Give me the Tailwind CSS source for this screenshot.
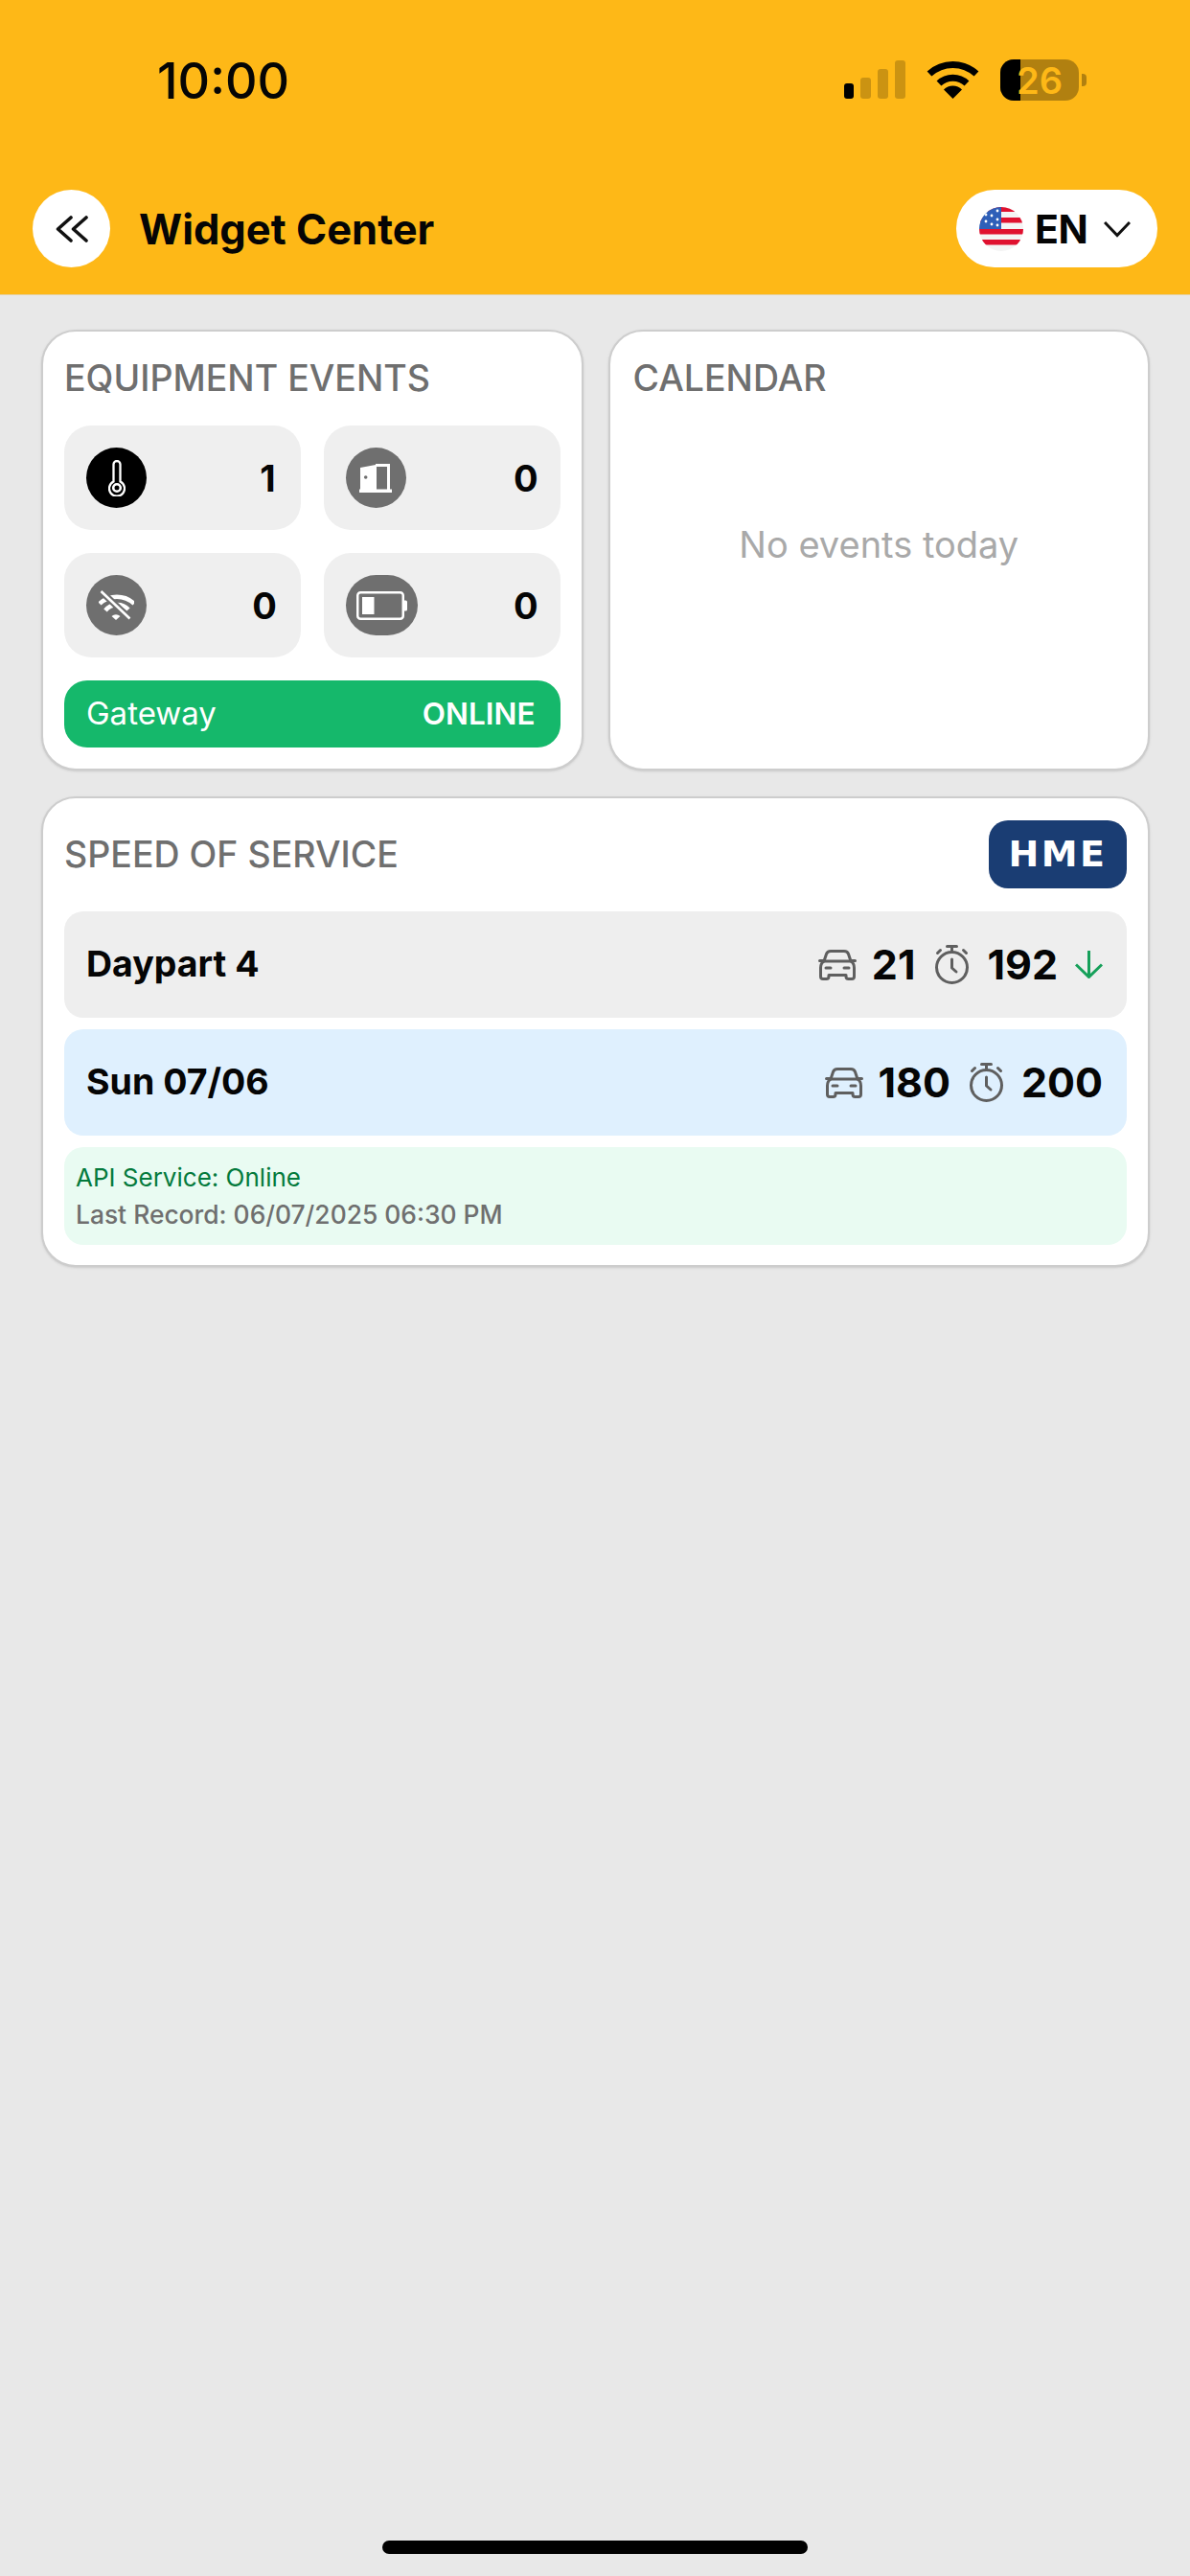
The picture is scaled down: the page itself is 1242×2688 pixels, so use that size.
<!DOCTYPE html>
<html lang="en">
<head>
  <meta charset="UTF-8" />
  <meta name="viewport" content="width=device-width, initial-scale=1.0" />
  <title>Widget Center</title>
  <script src="https://cdn.jsdelivr.net/npm/@tailwindcss/browser@4"></script>
</head>
<body class="w-[1242px] h-[2688px] flex flex-col bg-[#e8e8e8] font-['Inter',sans-serif] text-[#050505] overflow-hidden">

  <!-- Header -->
  <header class="h-[308px] bg-[#feb817] flex flex-col justify-between pb-[28px] border-b border-[#e6cf9a]">
    <div class="flex justify-between items-start pl-[164px] pr-[108px] pt-[55px]">
      <span class="text-[52px] leading-[60px] font-medium">10:00</span>
      <div class="flex items-start gap-[22px] pt-[8px]">
        <div class="flex items-end gap-[7px] h-[40px]">
          <div class="w-[10px] h-[16px] rounded-[3px] bg-black"></div>
          <div class="w-[11px] h-[22px] rounded-[3px] bg-black/20"></div>
          <div class="w-[11px] h-[31px] rounded-[3px] bg-black/20"></div>
          <div class="w-[11px] h-[40px] rounded-[3px] bg-black/20"></div>
        </div>
        <svg width="55" height="40" viewBox="0 0 55 40" fill="none" stroke="#000" stroke-width="7">
          <path d="M3 14 A36 36 0 0 1 52 14" />
          <path d="M13 24 A21 21 0 0 1 42 24" />
          <path d="M27.5 40 L18 30.5 A13.5 13.5 0 0 1 37 30.5 Z" fill="#000" stroke="none" />
        </svg>
        <div class="flex items-center gap-[3px] -mt-[1px]">
          <div class="relative w-[82px] h-[43px] rounded-[14px] bg-black/30 overflow-hidden flex items-center justify-center">
            <div class="absolute inset-y-0 left-0 w-[21px] bg-black"></div>
            <span class="relative text-[38px] leading-none font-semibold text-[#feb817]">26</span>
          </div>
          <div class="w-[5px] h-[13px] rounded-r-[4px] bg-black/30"></div>
        </div>
      </div>
    </div>

    <div class="flex justify-between items-center pl-[34px] pr-[34px]">
      <div class="flex items-center gap-[30px]">
        <button class="w-[81px] h-[81px] rounded-full bg-white flex items-center justify-center">
          <svg width="34" height="28" viewBox="0 0 34 28" fill="none" stroke="#111" stroke-width="3.6" stroke-linecap="round" stroke-linejoin="round">
            <path d="M16 2 L2.5 14 L16 26" />
            <path d="M32 2 L18.5 14 L32 26" />
          </svg>
        </button>
        <h1 class="text-[43.5px] leading-[54px] font-bold">Widget Center</h1>
      </div>
      <button class="w-[210px] h-[81px] rounded-[40px] bg-white flex items-center pl-[24px]">
        <svg width="46" height="46" viewBox="0 0 46 46">
          <defs><clipPath id="flagClip"><circle cx="23" cy="23" r="23" /></clipPath></defs>
          <g clip-path="url(#flagClip)">
            <rect width="46" height="46" fill="#f4f4f4" />
            <rect y="0" width="46" height="5" fill="#e0112f" />
            <rect y="11" width="46" height="5.5" fill="#e0112f" />
            <rect y="23" width="46" height="5.5" fill="#e0112f" />
            <rect y="34" width="46" height="5.5" fill="#e0112f" />
            <rect width="23" height="23" fill="#2f5fb8" />
            <g fill="#fff">
              <circle cx="7" cy="15" r="1.4" /><circle cx="13" cy="9" r="1.4" /><circle cx="19" cy="4" r="1.4" />
              <circle cx="13" cy="18" r="1.4" /><circle cx="19" cy="13" r="1.4" /><circle cx="7" cy="8" r="1.4" /><circle cx="19" cy="19" r="1.4" />
            </g>
          </g>
        </svg>
        <span class="w-[55px] ml-[12px] text-[41px] leading-[54px] font-bold tracking-[-0.5px]">EN</span>
        <svg class="ml-[17px]" width="28" height="18" viewBox="0 0 28 18" fill="none" stroke="#111" stroke-width="3">
          <path d="M1 2 L14 15.5 L27 2" />
        </svg>
      </button>
    </div>
  </header>

  <main class="flex-1 pl-[43px] pr-[42px] pt-[36px]">
    <div class="grid grid-cols-2 gap-[26px]">

      <!-- Equipment events -->
      <section class="h-[460px] bg-white border-2 border-[#cdcdcd] rounded-[36px] shadow-sm px-[22px] pt-[27px]">
        <h2 class="text-[37.5px] leading-[44px] font-medium text-[#6f6f6f]">EQUIPMENT EVENTS</h2>
        <div class="grid grid-cols-2 gap-[24px] mt-[27px]">
          <div class="h-[109px] rounded-[28px] bg-[#efefef] flex items-center justify-between pl-[23px] pr-[26px]">
            <div class="w-[63px] h-[63px] rounded-full bg-black flex items-center justify-center">
              <svg width="18" height="38" viewBox="0 0 18 38" fill="none" stroke="#fff" stroke-width="2.3">
                <path d="M5.5 22.5 V4.5 a3.5 3.5 0 0 1 7 0 V22.5 a8 8 0 1 1 -7 0 Z" />
                <circle cx="9" cy="29" r="3.8" stroke-width="2.6" />
              </svg>
            </div>
            <span class="text-[38px] leading-none font-bold">1</span>
          </div>
          <div class="h-[109px] rounded-[28px] bg-[#efefef] flex items-center justify-between pl-[23px] pr-[23px]">
            <div class="w-[63px] h-[63px] rounded-full bg-[#6f6f6f] flex items-center justify-center">
              <svg width="34" height="30" viewBox="0 0 34 30" fill="#fff">
                <rect y="26.5" width="34" height="3.5" />
                <path d="M1 27 V4 L17 1 V27 Z" />
                <path d="M17 0 H32 V27 H29 V3 H18 V27 H17 Z" />
                <circle cx="6.7" cy="14" r="1.8" fill="#6f6f6f" />
              </svg>
            </div>
            <span class="text-[38px] leading-none font-bold">0</span>
          </div>
          <div class="h-[109px] rounded-[28px] bg-[#efefef] flex items-center justify-between pl-[23px] pr-[25px]">
            <div class="w-[63px] h-[63px] rounded-full bg-[#6f6f6f] flex items-center justify-center">
              <svg width="37" height="31" viewBox="0 0 37 31" fill="none">
                <path d="M1 14 A26 26 0 0 1 37 14" stroke="#fff" stroke-width="4.5" />
                <path d="M7 21 A16 16 0 0 1 31 20" stroke="#fff" stroke-width="4.5" />
                <path d="M18 31 L13.5 27 A7 7 0 0 1 22.5 27 Z" fill="#fff" />
                <path d="M2.5 1 L32.5 29.5" stroke="#6f6f6f" stroke-width="7" />
                <path d="M2.5 1 L32.5 29.5" stroke="#fff" stroke-width="2.6" />
              </svg>
            </div>
            <span class="text-[38px] leading-none font-bold">0</span>
          </div>
          <div class="h-[109px] rounded-[28px] bg-[#efefef] flex items-center justify-between pl-[23px] pr-[23px]">
            <div class="h-[63px] rounded-full bg-[#6f6f6f] flex items-center pl-[11px] pr-[10px]">
              <svg width="54" height="30" viewBox="0 0 54 30" fill="none">
                <rect x="1.25" y="1.25" width="47.5" height="27.5" rx="3" stroke="#fff" stroke-width="2.5" />
                <rect x="6" y="6" width="12.5" height="18" fill="#fff" />
                <path d="M50 9.5 h1.5 a1.5 1.5 0 0 1 1.5 1.5 v8 a1.5 1.5 0 0 1 -1.5 1.5 h-1.5 Z" fill="#fff" />
              </svg>
            </div>
            <span class="text-[38px] leading-none font-bold">0</span>
          </div>
        </div>
        <div class="h-[70px] mt-[24px] rounded-[24px] bg-[#15b86b] text-white text-[33px] flex items-center justify-between pl-[23px] pr-[26px]">
          <span>Gateway</span>
          <span class="text-[31.5px] font-semibold">ONLINE</span>
        </div>
      </section>

      <!-- Calendar -->
      <section class="h-[460px] bg-white border-2 border-[#cdcdcd] rounded-[36px] shadow-sm px-[24px] pt-[27px]">
        <h2 class="text-[37.5px] leading-[44px] font-medium text-[#6f6f6f]">CALENDAR</h2>
        <p class="mt-[129px] text-center text-[38px] leading-[44px] text-[#a9a9a9]">No events today</p>
      </section>

      <!-- Speed of service -->
      <section class="col-span-2 mt-[1px] h-[491px] bg-white border-2 border-[#cdcdcd] rounded-[36px] shadow-sm px-[22px] pt-[23px]">
        <div class="flex items-center justify-between">
          <h2 class="text-[37.5px] leading-[44px] font-medium text-[#6f6f6f]">SPEED OF SERVICE</h2>
          <div class="w-[144px] h-[71px] rounded-[20px] bg-[#1a3d73] text-white flex items-center justify-center font-['DejaVu_Sans',sans-serif] font-bold text-[38px] tracking-[2.5px]">HME</div>
        </div>

        <div class="flex flex-col gap-[12px] mt-[24px]">
          <div class="h-[111px] rounded-[20px] bg-[#eeeeee] flex items-center justify-between pl-[23px] pr-[25px]">
            <span class="text-[37.5px] font-bold">Daypart 4</span>
            <div class="flex items-center text-[43px] font-bold">
              <svg width="40" height="32" viewBox="0 0 40 32" fill="none" stroke="#5f5f5f" stroke-width="3" stroke-linecap="round" stroke-linejoin="round">
                <path d="M6 12 L8.5 4.5 Q9.5 1.5 13 1.5 H27 Q30.5 1.5 31.5 4.5 L34 12" />
                <path d="M1.5 11.5 H6 M34 11.5 H38.5" />
                <path d="M6 12 Q2.5 14 2.5 19 V28 a2.5 2.5 0 0 0 2.5 2.5 h3.5 a2.5 2.5 0 0 0 2.5 -2.5 V26.5 H29 V28 a2.5 2.5 0 0 0 2.5 2.5 H35 a2.5 2.5 0 0 0 2.5 -2.5 V19 Q37.5 14 34 12 Z" />
                <path d="M8 19 H13 M27 19 H32" />
              </svg>
              <span class="ml-[16px]">21</span>
              <svg class="ml-[20px]" width="37" height="41" viewBox="0 0 37 41" fill="none" stroke="#5f5f5f" stroke-width="3" stroke-linecap="round" stroke-linejoin="round">
                <circle cx="18.5" cy="23.5" r="16" />
                <path d="M13.5 1.5 H23.5 M18.5 1.5 V7" />
                <path d="M3.5 8.5 L6.5 5.5 M33.5 8.5 L30.5 5.5" />
                <path d="M18.5 15 V24 L23 28" />
              </svg>
              <span class="ml-[18px]">192</span>
              <svg class="ml-[18px]" width="29" height="29" viewBox="0 0 29 29" fill="none" stroke="#16a05a" stroke-width="3">
                <path d="M14.5 0 V27" />
                <path d="M1 14.5 L14.5 27.5 L28 14.5" />
              </svg>
            </div>
          </div>
          <div class="h-[111px] rounded-[20px] bg-[#dff0fe] flex items-center justify-between pl-[23px] pr-[25px]">
            <span class="text-[37.5px] font-bold">Sun 07/06</span>
            <div class="flex items-center text-[43px] font-bold">
              <svg width="40" height="32" viewBox="0 0 40 32" fill="none" stroke="#5f5f5f" stroke-width="3" stroke-linecap="round" stroke-linejoin="round">
                <path d="M6 12 L8.5 4.5 Q9.5 1.5 13 1.5 H27 Q30.5 1.5 31.5 4.5 L34 12" />
                <path d="M1.5 11.5 H6 M34 11.5 H38.5" />
                <path d="M6 12 Q2.5 14 2.5 19 V28 a2.5 2.5 0 0 0 2.5 2.5 h3.5 a2.5 2.5 0 0 0 2.5 -2.5 V26.5 H29 V28 a2.5 2.5 0 0 0 2.5 2.5 H35 a2.5 2.5 0 0 0 2.5 -2.5 V19 Q37.5 14 34 12 Z" />
                <path d="M8 19 H13 M27 19 H32" />
              </svg>
              <span class="ml-[15px]">180</span>
              <svg class="ml-[19px]" width="37" height="41" viewBox="0 0 37 41" fill="none" stroke="#5f5f5f" stroke-width="3" stroke-linecap="round" stroke-linejoin="round">
                <circle cx="18.5" cy="23.5" r="16" />
                <path d="M13.5 1.5 H23.5 M18.5 1.5 V7" />
                <path d="M3.5 8.5 L6.5 5.5 M33.5 8.5 L30.5 5.5" />
                <path d="M18.5 15 V24 L23 28" />
              </svg>
              <span class="ml-[18px]">200</span>
            </div>
          </div>
          <div class="h-[102px] rounded-[20px] bg-[#e9fbf2] px-[12px] py-[12px] text-[26px] leading-[39px]">
            <p class="text-[#047a3c]">API Service: Online</p>
            <p class="text-[#6f6f6f] text-[26.4px] font-medium">Last Record: 06/07/2025 06:30 PM</p>
          </div>
        </div>
      </section>
    </div>
  </main>

  <!-- Home indicator -->
  <div class="h-[37px] flex justify-center shrink-0">
    <div class="w-[444px] h-[14px] rounded-full bg-black"></div>
  </div>
</body>
</html>
